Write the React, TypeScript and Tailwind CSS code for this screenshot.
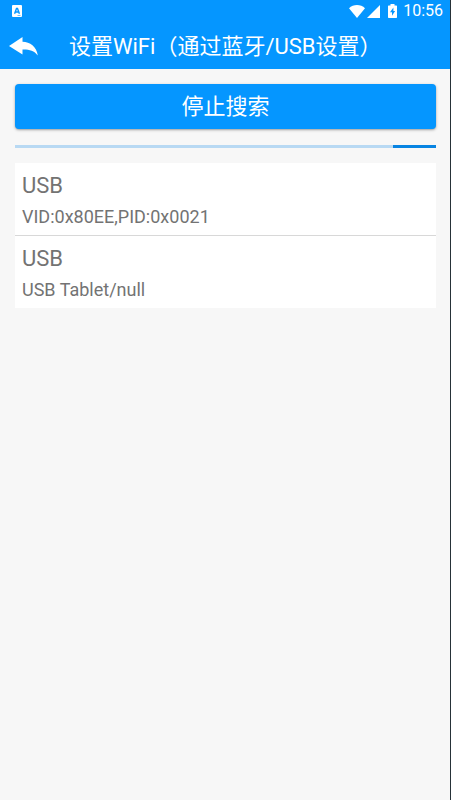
import { useState } from 'react';

const devices = [
  { name: 'USB', detail: 'VID:0x80EE,PID:0x0021' },
  { name: 'USB', detail: 'USB Tablet/null' },
];

function StatusBar() {
  return (
    <div className="flex h-6 items-center justify-between pb-0.5 pl-3 pr-[7px] text-white">
      <svg viewBox="0 0 10 12" className="h-3 w-2.5" fill="currentColor" aria-hidden="true">
        <rect width="10" height="12" rx="1" />
        <path d="M2.600 8.800 4.500 3.500h1L7.400 8.800M3.400 7h3.200" stroke="#0596ff" strokeWidth="1.400" fill="none" />
        <path d="M5.500 10.500h3" stroke="#0596ff" strokeWidth="0.600" />
      </svg>
      <div className="flex items-center">
        <svg viewBox="0 0 16 13" className="h-[13px] w-4" fill="currentColor" aria-hidden="true">
          <path d="M8 13 0 3.2C2.2 1.2 5 0 8 0s5.800 1.200 8 3.200Z" />
        </svg>
        <svg viewBox="0 0 13 13" className="ml-0.5 h-[13px] w-[13px]" fill="currentColor" aria-hidden="true">
          <path d="M13 0v13H0Z" />
        </svg>
        <svg viewBox="0 0 9 14" className="ml-2 h-3.5 w-[9px]" fill="currentColor" aria-hidden="true">
          <path
            fillRule="evenodd"
            d="M2.500 0h4v1.400H8.300q.7 0 .7.7V13.300q0 .7-.7.7H.7Q0 14 0 13.300V2.100q0-.7.7-.7h1.800ZM5.400 3.500 2 8.300h2v3.500L7.100 7H5.400Z"
          />
        </svg>
        <span className="ml-1.5 text-base leading-6">10:56</span>
      </div>
    </div>
  );
}

function App() {
  const [searching, setSearching] = useState(true);

  return (
    <div className="min-h-screen border-r border-[#263238] bg-[#f7f7f7] font-['Roboto','Noto_Sans_CJK_SC',sans-serif]">
      <header className="bg-[#0596ff] text-white">
        <StatusBar />
        <div className="flex h-[45px] items-center">
          <button type="button" aria-label="返回" className="w-[69px] shrink-0 pl-[9px]">
            <svg viewBox="0 0 29 19" className="h-[19px] w-[29px]" fill="currentColor" aria-hidden="true">
              <path d="M0 9 13.500 0v4.800C21 5 27.500 9.500 28.800 18.500 25 13.500 20 12.300 13.500 12.500v5Z" />
            </svg>
          </button>
          <h1 className="whitespace-nowrap text-[22px] leading-8">设置WiFi（通过蓝牙/USB设置）</h1>
        </div>
      </header>

      <main className="pl-[15px] pr-[14px] pt-[15px]">
        <button
          type="button"
          onClick={() => setSearching(!searching)}
          className="block h-[45px] w-full rounded bg-[#0596ff] text-[22px] leading-8 text-white shadow-sm shadow-black/30"
        >
          {searching ? '停止搜索' : '开始搜索'}
        </button>

        {/* Search progress */}
        <div className="flex h-[34px] items-center">
          <div className="flex h-[3px] w-full justify-end bg-[#b8d9f3]">
            {searching && <div className="w-[43px] bg-[#0884e2]" />}
          </div>
        </div>

        <ul className="divide-y divide-[#d8d8d8] bg-white text-[#737373]">
          {devices.map((device) => (
            <li key={device.detail} className="px-[7px] pb-1.5 pt-2">
              <p className="text-[22px] leading-[30px]">{device.name}</p>
              <p className="pt-1 text-lg leading-6">{device.detail}</p>
            </li>
          ))}
        </ul>
      </main>
    </div>
  );
}

export default App;
